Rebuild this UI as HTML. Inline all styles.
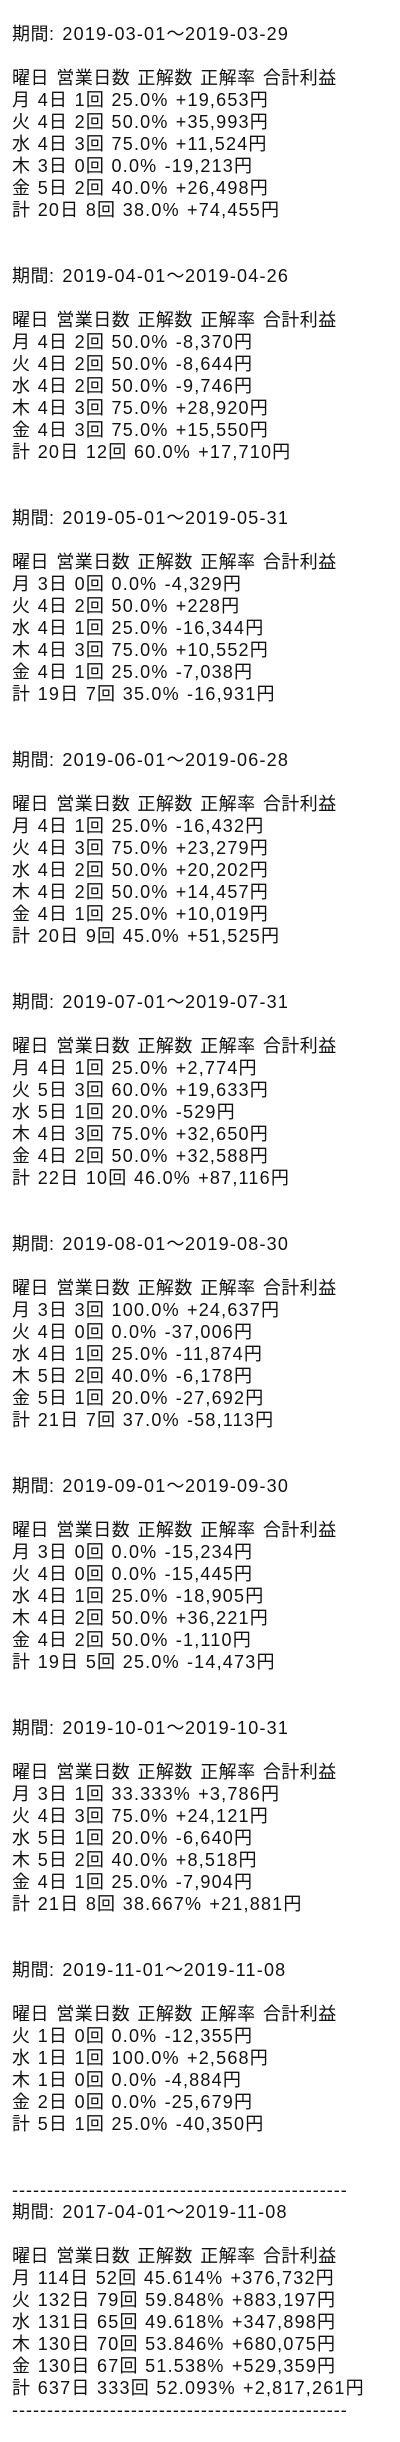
<!DOCTYPE html>
<html><head><meta charset="utf-8"><style>
html,body{margin:0;padding:0;background:#fff;}
body{width:400px;height:2442px;overflow:hidden;}
pre{margin:0;padding:23px 0 0 12px;font-family:"Liberation Sans","Noto Sans CJK JP",sans-serif;font-size:18px;line-height:22px;color:#111;white-space:pre;letter-spacing:1.2px;word-spacing:1px;}
.c{letter-spacing:0.5px;}
.d{letter-spacing:1px;word-spacing:0;}
</style></head><body><pre id="t">期間: 2019-03-01～2019-03-29

曜日 営業日数 正解数 正解率 合計利益
月 4日 1回 25.0% +19,653円
火 4日 2回 50.0% +35,993円
水 4日 3回 75.0% +11,524円
木 3日 0回 0.0% -19,213円
金 5日 2回 40.0% +26,498円
計 20日 8回 38.0% +74,455円


期間: 2019-04-01～2019-04-26

曜日 営業日数 正解数 正解率 合計利益
月 4日 2回 50.0% -8,370円
火 4日 2回 50.0% -8,644円
水 4日 2回 50.0% -9,746円
木 4日 3回 75.0% +28,920円
金 4日 3回 75.0% +15,550円
計 20日 12回 60.0% +17,710円


期間: 2019-05-01～2019-05-31

曜日 営業日数 正解数 正解率 合計利益
月 3日 0回 0.0% -4,329円
火 4日 2回 50.0% +228円
水 4日 1回 25.0% -16,344円
木 4日 3回 75.0% +10,552円
金 4日 1回 25.0% -7,038円
計 19日 7回 35.0% -16,931円


期間: 2019-06-01～2019-06-28

曜日 営業日数 正解数 正解率 合計利益
月 4日 1回 25.0% -16,432円
火 4日 3回 75.0% +23,279円
水 4日 2回 50.0% +20,202円
木 4日 2回 50.0% +14,457円
金 4日 1回 25.0% +10,019円
計 20日 9回 45.0% +51,525円


期間: 2019-07-01～2019-07-31

曜日 営業日数 正解数 正解率 合計利益
月 4日 1回 25.0% +2,774円
火 5日 3回 60.0% +19,633円
水 5日 1回 20.0% -529円
木 4日 3回 75.0% +32,650円
金 4日 2回 50.0% +32,588円
計 22日 10回 46.0% +87,116円


期間: 2019-08-01～2019-08-30

曜日 営業日数 正解数 正解率 合計利益
月 3日 3回 100.0% +24,637円
火 4日 0回 0.0% -37,006円
水 4日 1回 25.0% -11,874円
木 5日 2回 40.0% -6,178円
金 5日 1回 20.0% -27,692円
計 21日 7回 37.0% -58,113円


期間: 2019-09-01～2019-09-30

曜日 営業日数 正解数 正解率 合計利益
月 3日 0回 0.0% -15,234円
火 4日 0回 0.0% -15,445円
水 4日 1回 25.0% -18,905円
木 4日 2回 50.0% +36,221円
金 4日 2回 50.0% -1,110円
計 19日 5回 25.0% -14,473円


期間: 2019-10-01～2019-10-31

曜日 営業日数 正解数 正解率 合計利益
月 3日 1回 33.333% +3,786円
火 4日 3回 75.0% +24,121円
水 5日 1回 20.0% -6,640円
木 5日 2回 40.0% +8,518円
金 4日 1回 25.0% -7,904円
計 21日 8回 38.667% +21,881円


期間: 2019-11-01～2019-11-08

曜日 営業日数 正解数 正解率 合計利益
火 1日 0回 0.0% -12,355円
水 1日 1回 100.0% +2,568円
木 1日 0回 0.0% -4,884円
金 2日 0回 0.0% -25,679円
計 5日 1回 25.0% -40,350円


<span class="d">------------------------------------------------</span>
期間: 2017-04-01～2019-11-08

曜日 営業日数 正解数 正解率 合計利益
月 114日 52回 45.614% +376,732円
火 132日 79回 59.848% +883,197円
水 131日 65回 49.618% +347,898円
木 130日 70回 53.846% +680,075円
金 130日 67回 51.538% +529,359円
計 637日 333回 52.093% +2,817,261円
<span class="d">------------------------------------------------</span></pre>
<script>
var t=document.getElementById('t');
t.innerHTML=t.innerHTML.replace(/([\u3000-\u9fff\uff00-\uffef]+)/g,'<span class="c">$1</span>');
</script>
</body></html>
